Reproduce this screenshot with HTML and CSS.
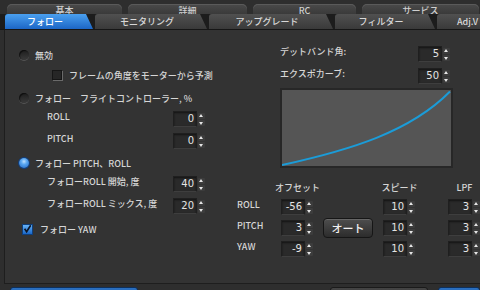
FILE: index.html
```html
<html>
<head>
<meta charset="utf-8">
<link rel="stylesheet" href="styles.css">
</head>
<body>
  <div class="tabs">
    <div class="tabrow back">
      <div class="btab" style="width:115px">基本</div>
      <div class="btab" style="width:119px">詳細</div>
      <div class="btab" style="width:103px">RC</div>
      <div class="btab" style="width:117px">サービス</div>
    </div>
    <div class="tabrow front">
      <div class="ftab active" style="width:88px">フォロー</div>
      <div class="ftab" style="width:112px">モニタリング</div>
      <div class="ftab" style="width:124px">アップグレード</div>
      <div class="ftab" style="width:100px">フィルター</div>
      <div class="ftab last" style="width:45px">Adj.V</div>
    </div>
  </div>

  <div class="panel">
    <div class="left">
      <div class="row r1"><span class="radio"></span><span class="lbl">無効</span></div>
      <div class="row r2 sub"><span class="check"></span><span class="lbl">フレームの角度をモーターから予測</span></div>
      <div class="row r3"><span class="radio"></span><span class="lbl">フォロー　フライトコントローラー, %</span></div>
      <div class="row r4 param">
        <span class="lbl">ROLL</span>
        <div class="spin"><span class="val">0</span><span class="step"><i class="up"></i><i class="dn"></i></span></div>
      </div>
      <div class="row r5 param">
        <span class="lbl">PITCH</span>
        <div class="spin"><span class="val">0</span><span class="step"><i class="up"></i><i class="dn"></i></span></div>
      </div>
      <div class="row r6"><span class="radio on"></span><span class="lbl">フォロー PITCH、ROLL</span></div>
      <div class="row r7 param">
        <span class="lbl">フォローROLL 開始, 度</span>
        <div class="spin"><span class="val">40</span><span class="step"><i class="up"></i><i class="dn"></i></span></div>
      </div>
      <div class="row r8 param">
        <span class="lbl">フォローROLL ミックス, 度</span>
        <div class="spin"><span class="val">20</span><span class="step"><i class="up"></i><i class="dn"></i></span></div>
      </div>
      <div class="row r9">
        <span class="check on">
          <svg width="10" height="10" viewBox="0 0 10 10"><path d="M1.8 4.8 L4 8 L8.6 0.8" fill="none" stroke="#0d1626" stroke-width="1.8"/></svg>
        </span>
        <span class="lbl">フォロー YAW</span>
      </div>
    </div>

    <div class="right">
      <div class="top">
        <div class="trow">
          <span class="lbl">デットバンド角:</span>
          <div class="spin"><span class="val">5</span><span class="step"><i class="up"></i><i class="dn"></i></span></div>
        </div>
        <div class="trow t2">
          <span class="lbl">エクスポカーブ:</span>
          <div class="spin"><span class="val">50</span><span class="step"><i class="up"></i><i class="dn"></i></span></div>
        </div>
        <div class="graph">
          <svg width="169" height="76" viewBox="0 0 169 76">
            <path d="M0 75 C 68 60, 128 42, 168 1.5" fill="none" stroke="#1b9cd8" stroke-width="2"/>
          </svg>
        </div>
      </div>

      <div class="grid">
        <span></span>
        <div class="head"><span>オフセット</span></div>
        <span></span>
        <div class="head"><span>スピード</span></div>
        <div class="head"><span>LPF</span></div>

        <span class="axis">ROLL</span>
        <div class="spin"><span class="val">-56</span><span class="step"><i class="up"></i><i class="dn"></i></span></div>
        <span></span>
        <div class="spin"><span class="val">10</span><span class="step"><i class="up"></i><i class="dn"></i></span></div>
        <div class="spin"><span class="val">3</span><span class="step"><i class="up"></i><i class="dn"></i></span></div>

        <span class="axis">PITCH</span>
        <div class="spin"><span class="val">3</span><span class="step"><i class="up"></i><i class="dn"></i></span></div>
        <div class="auto">オート</div>
        <div class="spin"><span class="val">10</span><span class="step"><i class="up"></i><i class="dn"></i></span></div>
        <div class="spin"><span class="val">3</span><span class="step"><i class="up"></i><i class="dn"></i></span></div>

        <span class="axis">YAW</span>
        <div class="spin"><span class="val">-9</span><span class="step"><i class="up"></i><i class="dn"></i></span></div>
        <span></span>
        <div class="spin"><span class="val">10</span><span class="step"><i class="up"></i><i class="dn"></i></span></div>
        <div class="spin"><span class="val">3</span><span class="step"><i class="up"></i><i class="dn"></i></span></div>
      </div>
    </div>
  </div>

  <div class="buttons">
    <div class="btn blue" style="width:128px"></div>
    <div class="btn gray" style="width:98px"></div>
    <div class="btn blue" style="width:42px"></div>
  </div>
</body>
</html>
```

FILE: styles.css
```css
html, body
{
  margin: 0;
  padding: 0;
  overflow: hidden;
  background: #2e2e2e;
  color: #d6d6d6;
  font-family: "Noto Sans CJK JP", "Liberation Sans", sans-serif;
  font-size: 9px;
  font-weight: 500;
}

.tabs{
  padding-top: 4px;
}
.tabrow{
  display: flex;
  white-space: nowrap;
}
.back{
  height: 10px;
  padding-left: 7px;
  gap: 6px;
}
.btab{
  flex: none;
  height: 10px;
  line-height: 13px;
  text-align: center;
  border-radius: 5px 5px 0 0;
  background: linear-gradient(#4a4a4a, #3a3a3a);
  box-shadow: inset 0 1px 0 #5a5a5a;
  color: #cfcfcf;
}

.front{
  position: relative;
  z-index: 1;
  height: 15px;
  padding-left: 5px;
  gap: 2px;
  background: #1c1c1c;
  border-bottom: 1px solid #161616;
}
.ftab{
  flex: none;
  height: 15px;
  line-height: 15px;
  text-align: center;
  padding-right: 8px;
  box-sizing: border-box;
  border-radius: 3px 0 0 0;
  background: linear-gradient(#505050, #3a3a3a);
  color: #d8d8d8;
  clip-path: polygon(0 0, calc(100% - 7px) 0, 100% 100%, 0 100%);
}
.ftab.active{
  background: linear-gradient(#4aa0ef, #1c66c6);
  color: #fff;
}
.ftab.last{
  text-align: left;
  padding-left: 20px;
  padding-right: 0;
  clip-path: none;
}

.panel{
  display: flex;
  margin-left: 4px;
  height: 253px;
  background: #333333;
  border-left: 1px solid #1e1e1e;
  border-bottom: 1px solid #1e1e1e;
}

.left{
  width: 201px;
  padding-left: 13px;
  padding-top: 17px;
  box-sizing: border-box;
  flex: none;
}
.row{
  display: flex;
  align-items: center;
  height: 16px;
  white-space: nowrap;
}
.r2{ margin-top: 4px; }
.r3{ margin-top: 7px; }
.r4{ margin-top: 5px; }
.r5{ margin-top: 6px; }
.r6{ margin-top: 6px; }
.r7{ margin-top: 5px; }
.r8{ margin-top: 6px; }
.r9{ margin-top: 7px; }

.sub{
  padding-left: 34px;
}
.param{
  padding-left: 29px;
}
.param .lbl{
  padding-bottom: 5px;
}
.param .spin{
  margin-left: auto;
}

.radio{
  flex: none;
  width: 10px;
  height: 10px;
  border-radius: 50%;
  background: linear-gradient(#1e1e1e, #3a3a3a);
  box-shadow: inset 1px 1px 1px rgba(0,0,0,.6), 0 1px 0 #555;
  margin-right: 6px;
  margin-left: 1px;
}
.radio.on{
  background: radial-gradient(circle at 50% 35%, #bfe0ff 0, #5aa8f2 35%, #1d66c8 100%);
  box-shadow: 0 0 0 1px #103f80;
}

.check{
  flex: none;
  width: 8px;
  height: 8px;
  background: #262626;
  border: 1px solid #161616;
  box-shadow: 1px 1px 0 #6a6a6a;
  margin-right: 7px;
}
.check.on{
  display: flex;
  align-items: center;
  justify-content: center;
  width: 9px;
  height: 9px;
  border: 1px solid #0f3f7c;
  background: linear-gradient(#66b2f6, #1a67c8);
  box-shadow: none;
  margin-left: 4px;
  margin-right: 7px;
}

.spin{
  display: flex;
  width: 33px;
  height: 16px;
  flex: none;
}
.spin .val{
  width: 24px;
  height: 16px;
  box-sizing: border-box;
  background: #2a2a2a;
  border: 1px solid #1f1f1f;
  border-bottom-color: #3e3e3e;
  box-shadow: inset 0 1px 2px rgba(0,0,0,.55);
  text-align: right;
  padding-right: 2px;
  line-height: 14px;
  font-size: 10px;
  font-weight: normal;
  color: #e4e4e4;
  font-family: "DejaVu Sans", sans-serif;
}
.step{
  display: flex;
  flex-direction: column;
  justify-content: center;
  gap: 1px;
  width: 8px;
  margin-left: 1px;
}
.step i{
  display: block;
  width: 7px;
  height: 6px;
  border-radius: 1px;
  background: #3c3c3c;
  position: relative;
}
.step i::after{
  content: "";
  position: absolute;
  left: 1px;
  border-left: 2.5px solid transparent;
  border-right: 2.5px solid transparent;
}
.step .up::after{
  top: 1px;
  border-bottom: 3px solid #e6e6e6;
}
.step .dn::after{
  top: 2px;
  border-top: 3px solid #e6e6e6;
}

.right{
  flex: 1;
  padding-top: 16px;
  white-space: nowrap;
}
.top{
  margin-left: 74px;
  width: 173px;
}
.trow{
  display: flex;
  align-items: center;
  height: 16px;
}
.trow .lbl{
  padding-bottom: 5px;
}
.trow .spin{
  margin-left: auto;
  margin-right: 2px;
}
.t2{
  margin-top: 6px;
}
.graph{
  margin-top: 4px;
  width: 173px;
  height: 80px;
  box-sizing: border-box;
  border: 2px solid #272727;
  background: #555555;
}
.graph svg{
  display: block;
}

.grid{
  display: grid;
  margin-left: 31px;
  margin-top: 14px;
  grid-template-columns: 44px 42px 60px 65px 33px;
  grid-template-rows: 12px 16px 16px 16px;
  row-gap: 5px;
}
.head{
  display: flex;
  justify-content: center;
  width: 33px;
  line-height: 12px;
}
.axis{
  line-height: 11px;
  align-self: start;
}
.auto{
  align-self: center;
  width: 50px;
  height: 20px;
  box-sizing: border-box;
  border: 1px solid #161616;
  border-radius: 4px;
  background: linear-gradient(#4e4e4e, #2c2c2c);
  box-shadow: inset 0 1px 0 #666;
  color: #f0f0f0;
  font-size: 11px;
  line-height: 18px;
  text-align: center;
}

.buttons{
  display: flex;
  margin-top: 3px;
  padding-left: 10px;
}
.btn{
  height: 20px;
  box-sizing: border-box;
  border-radius: 3px;
  flex: none;
}
.btn.blue{
  background: linear-gradient(#2a6fc0, #1a5aa8);
  border: 1px solid #0e2f5a;
}
.btn.gray{
  margin-left: 192px;
  margin-right: 10px;
  background: linear-gradient(#444, #333);
  border: 1px solid #1a1a1a;
}
```
